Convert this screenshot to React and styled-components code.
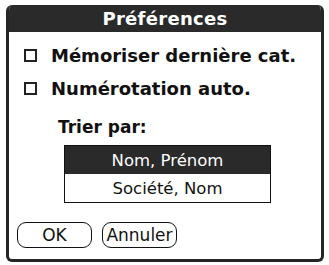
import React from "react";
import styled, { createGlobalStyle } from "styled-components";

const Global = createGlobalStyle`
  html, body {
    margin: 0;
    padding: 0;
    background: #fff;
  }
  body {
    font-family: "DejaVu Sans", "Liberation Sans", sans-serif;
  }
`;

const Page = styled.div`
  width: 329px;
  height: 265px;
  padding: 5px 5px 3px 6px;
  box-sizing: border-box;
`;

const Dialog = styled.div`
  width: 318px;
  height: 257px;
  box-sizing: border-box;
  border: 3px solid #252525;
  border-top: none;
  border-radius: 6px;
  display: flex;
  flex-direction: column;
  overflow: hidden;
`;

const TitleBar = styled.div`
  height: 27px;
  margin: 0 -3px;
  background: #2a2a2a;
  color: #fff;
  font-weight: bold;
  font-size: 18px;
  display: flex;
  align-items: center;
  justify-content: center;
  letter-spacing: 0.3px;
`;

const Body = styled.div`
  flex: 1;
  display: flex;
  flex-direction: column;
  padding: 12px 0 0 16px;
`;

const CheckRow = styled.div`
  display: flex;
  align-items: center;
  height: 22px;
  margin-bottom: 11px;
  font-weight: bold;
  font-size: 18px;
  color: #111;
`;

const Box = styled.div`
  width: 13px;
  height: 13px;
  min-width: 13px;
  box-sizing: border-box;
  border: 2px solid #222;
  margin: 0 14px 0 -1px;
  flex: 0 0 13px;
`;

const Label = styled.div`
  margin: 7px 0 8px 33px;
  font-weight: bold;
  font-size: 17px;
  color: #111;
`;

const List = styled.div`
  margin-left: 39px;
  width: 207px;
  border: 1.5px solid #111;
  box-sizing: border-box;
`;

const Item = styled.div`
  height: 28px;
  display: flex;
  align-items: center;
  justify-content: center;
  font-size: 16.5px;
  background: ${(p) => (p.$selected ? "#2a2a2a" : "#fff")};
  color: ${(p) => (p.$selected ? "#fff" : "#111")};
`;

const Buttons = styled.div`
  display: flex;
  gap: 10px;
  padding: 0 0 11px 8px;
`;

const Button = styled.div`
  width: ${(p) => p.$w}px;
  height: 26px;
  box-sizing: border-box;
  border: 1.5px solid #111;
  border-radius: 9px;
  display: flex;
  align-items: center;
  justify-content: center;
  font-size: 17px;
  color: #111;
`;

export default function App() {
  return (
    <Page>
      <Global />
      <Dialog>
        <TitleBar>Préférences</TitleBar>
        <Body>
          <CheckRow>
            <Box />
            Mémoriser dernière cat.
          </CheckRow>
          <CheckRow>
            <Box />
            Numérotation auto.
          </CheckRow>
          <Label>Trier par:</Label>
          <List>
            <Item $selected>Nom, Prénom</Item>
            <Item>Société, Nom</Item>
          </List>
        </Body>
        <Buttons>
          <Button $w={75}>OK</Button>
          <Button $w={75}>Annuler</Button>
        </Buttons>
      </Dialog>
    </Page>
  );
}
